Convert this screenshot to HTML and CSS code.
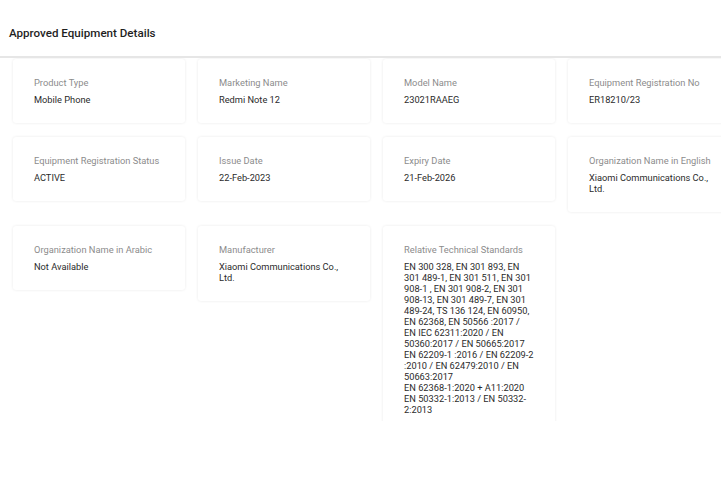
FILE: index.html
```html
<!DOCTYPE html>
<html lang="en">
<head>
    <meta charset="UTF-8">
    <meta name="viewport" content="width=device-width, initial-scale=1.0">
    <title>Approved Equipment Details</title>
    <link rel="stylesheet" href="styles.css">
</head>
<body>
    <div class="page-header">
        <h2>Approved Equipment Details</h2>
    </div>
    <div class="details-area">
        <div class="details-grid">
            <div class="detail-card">
                <div class="detail-label">Product Type</div>
                <div class="detail-value">Mobile Phone</div>
            </div>
            <div class="detail-card">
                <div class="detail-label">Marketing Name</div>
                <div class="detail-value">Redmi Note 12</div>
            </div>
            <div class="detail-card">
                <div class="detail-label">Model Name</div>
                <div class="detail-value">23021RAAEG</div>
            </div>
            <div class="detail-card">
                <div class="detail-label">Equipment Registration No</div>
                <div class="detail-value">ER18210/23</div>
            </div>

            <div class="detail-card">
                <div class="detail-label">Equipment Registration Status</div>
                <div class="detail-value">ACTIVE</div>
            </div>
            <div class="detail-card">
                <div class="detail-label">Issue Date</div>
                <div class="detail-value">22-Feb-2023</div>
            </div>
            <div class="detail-card">
                <div class="detail-label">Expiry Date</div>
                <div class="detail-value">21-Feb-2026</div>
            </div>
            <div class="detail-card">
                <div class="detail-label">Organization Name in English</div>
                <div class="detail-value">Xiaomi Communications Co., Ltd.</div>
            </div>

            <div class="detail-card">
                <div class="detail-label">Organization Name in Arabic</div>
                <div class="detail-value">Not Available</div>
            </div>
            <div class="detail-card">
                <div class="detail-label">Manufacturer</div>
                <div class="detail-value">Xiaomi Communications Co., Ltd.</div>
            </div>
            <div class="detail-card">
                <div class="detail-label">Relative Technical Standards</div>
                <div class="detail-value">EN 300 328, EN 301 893, EN 301 489-1, EN 301 511, EN 301 908-1 , EN 301 908-2, EN 301 908-13, EN 301 489-7, EN 301 489-24, TS 136 124, EN 60950, EN 62368, EN 50566 :2017 /<br>EN IEC 62311:2020 / EN 50360:2017 / EN 50665:2017<br>EN 62209-1 :2016 / EN 62209-2 :2010 / EN 62479:2010 / EN 50663:2017<br>EN 62368-1:2020 + A11:2020<br>EN 50332-1:2013 / EN 50332-2:2013</div>
            </div>
        </div>
    </div>
</body>
</html>
```

FILE: styles.css
```css
body {
    font-family: 'Roboto', 'Liberation Sans', sans-serif;
    background-color: #fff;
    margin: 0;
    overflow: hidden;
}
.page-header {
    padding: 26px 9px 16px;
    border-bottom: 2px solid #e6e6e6;
}
.page-header h2 {
    margin: 0;
    font-size: 11.6px;
    line-height: 14px;
    font-weight: 500;
    color: #1f1f1f;
}
.details-area {
    height: 362px;
    overflow: hidden;
    padding: 1px 0 0 13px;
}
.details-grid {
    display: grid;
    grid-template-columns: repeat(4, 172px);
    column-gap: 13px;
    row-gap: 14px;
    align-items: start;
}
.detail-card {
    background-color: #fff;
    border-radius: 3px;
    box-shadow: 0 0 3px rgba(0, 0, 0, 0.09);
    padding: 18px 20px 18px 21px;
}
.detail-label {
    font-size: 9.3px;
    line-height: 12px;
    color: #8c8c8c;
    margin-bottom: 5px;
}
.detail-value {
    font-size: 9.25px;
    line-height: 11px;
    color: #2b2b2b;
}
```
